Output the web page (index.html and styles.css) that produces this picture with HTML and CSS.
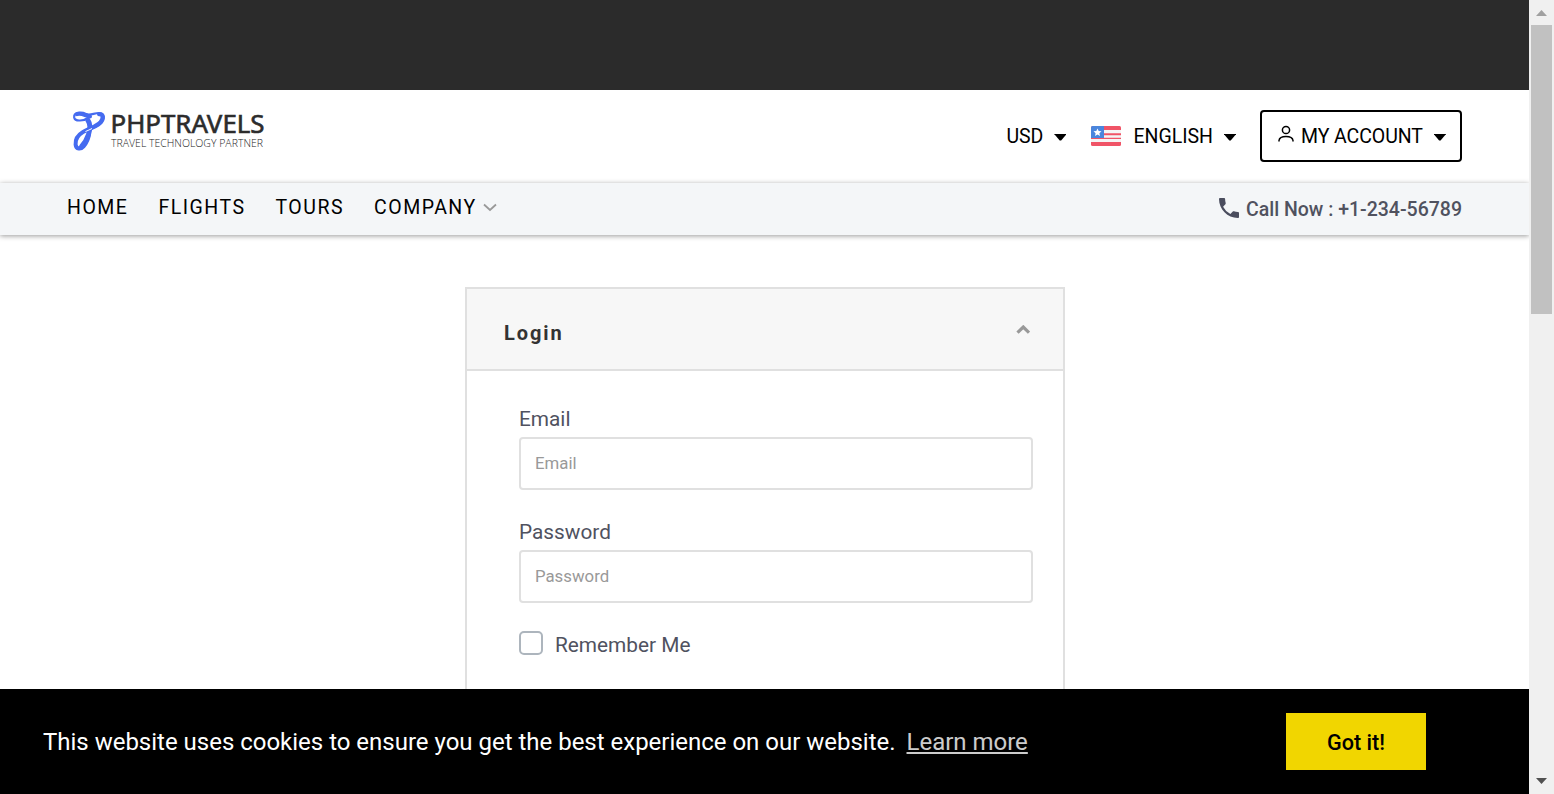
FILE: index.html
```html
<!DOCTYPE html>
<html lang="en">
<head>
<meta charset="utf-8">
<title>Login</title>
<link rel="stylesheet" href="styles.css">
</head>
<body>
<div class="window">
  <div class="page">
    <div class="topbar"></div>
    <header class="header">
      <svg class="logo" width="200" height="46" viewBox="0 0 200 46">
        <g fill="none" stroke="#456bf0" stroke-linecap="round" stroke-linejoin="round">
          <path stroke-width="2.200" d="M19 10.500C14 14 5 15 4.200 10.500C3.500 5.500 11 4.500 16 7C20 9 24 6 29 6C35 6 35 12 31.500 16C28 20 22 22 16 24"/>
          <path stroke-width="4" d="M7 7.200C12 5.500 16 9.500 20 9.500M29 7.200C34 7 33 12 30.500 15C27 19 20 21 13 25C8 28 5.200 33 5.600 37.500C6 42.500 11 42.500 13.500 39.500C16.500 36 18.500 31 19 27"/>
          <path stroke-width="5" d="M18 13.500C20.500 17 20 23 18.500 27.500C17 32 15 36 11.500 39.500"/>
        </g>
        <path fill="none" stroke="#fff" stroke-width="1" d="M15.500 24.500C18 23.500 20 22.500 22 21.500"/>
        <text class="logo-name" x="40.500" y="26" textLength="154" lengthAdjust="spacingAndGlyphs">PHPTRAVELS</text>
        <text class="logo-tag" x="41" y="40.300" textLength="152" lengthAdjust="spacingAndGlyphs">TRAVEL TECHNOLOGY PARTNER</text>
      </svg>
      <div class="tools">
        <div class="pick usd"><span>USD</span><i class="caret"></i></div>
        <div class="pick lang">
          <svg class="flag" width="30" height="20" viewBox="0 0 30 20">
            <rect width="30" height="20" rx="1.500" fill="#f05467"/>
            <path fill="#f5f5f5" d="M13 4h17v3.200H13zM13 9.300h17v2.500H13zM0 13h30v3H0z"/>
            <path fill="#4a86dd" d="M1.500 0H13v12H0V1.500Q0 0 1.500 0z"/>
            <path fill="#fff" d="M6.500 2.500l1.200 2.500 2.800.300-2.100 1.900.600 2.800-2.500-1.400L4 10l.600-2.800-2.100-1.900 2.800-.300z"/>
          </svg>
          <span>ENGLISH</span><i class="caret"></i>
        </div>
        <div class="pick account">
          <svg width="16" height="18" viewBox="0 0 16 18" fill="none" stroke="#000" stroke-width="1.500"><circle cx="8" cy="5" r="3.600"/><path d="M1 16.500V15.500Q1.500 11.500 8 11.500T15 15.500V16.500"/></svg>
          <span>MY ACCOUNT</span><i class="caret"></i>
        </div>
      </div>
    </header>
    <nav class="nav">
      <div class="links">
        <a>HOME</a><a>FLIGHTS</a><a>TOURS</a><a>COMPANY</a>
        <svg width="14" height="9" viewBox="0 0 14 9" fill="none" stroke="#999" stroke-width="1.800"><path d="M1 1.500l6 5.500 6-5.500"/></svg>
      </div>
      <div class="phone">
        <svg width="20" height="20" viewBox="0 0 20 20" fill="#4a4d5e"><path d="M4.100 8.700a16.800 16.800 0 0 0 7.300 7.300l2.400-2.400c.3-.3.800-.4 1.200-.3 1.200.4 2.500.6 3.900.6.600 0 1.100.5 1.100 1.100v3.900c0 .6-.5 1.100-1.100 1.100C8.500 20 0 11.500 0 1.100 0 .5.500 0 1.100 0H5c.6 0 1.100.5 1.100 1.100 0 1.400.2 2.700.6 3.900.1.400 0 .9-.3 1.200z"/></svg>
        <span>Call Now : +1-234-56789</span>
      </div>
    </nav>
    <main class="card">
      <div class="card-head">
        <h1>Login</h1>
        <svg width="14" height="9" viewBox="0 0 14 9" fill="none" stroke="#999" stroke-width="3.200"><path d="M1.500 7.700L7.300 2l5.700 5.700"/></svg>
      </div>
      <form class="card-body">
        <label for="email">Email</label>
        <input class="field" id="email" type="email" placeholder="Email">
        <label for="password">Password</label>
        <input class="field" id="password" type="password" placeholder="Password">
        <div class="remember"><i class="box"></i><span>Remember Me</span></div>
      </form>
    </main>
    <div class="cookies">
      <p>This website uses cookies to ensure you get the best experience on our website. <a>Learn more</a></p>
      <button type="button">Got it!</button>
    </div>
  </div>
  <div class="scrollbar">
    <svg width="11" height="6" viewBox="0 0 11 6" fill="#a0a0a0"><path d="M0 6L5.500 0 11 6z"/></svg>
    <div class="thumb"></div>
    <svg class="down" width="11" height="6" viewBox="0 0 11 6" fill="#505050"><path d="M0 0h11L5.500 6z"/></svg>
  </div>
</div>
</body>
</html>
```
FILE: styles.css
```css
* { box-sizing: border-box; }
body { margin: 0; background: #fff; font-family: Roboto, "Liberation Sans", sans-serif; overflow: hidden; }
.window { display: flex; width: 1554px; height: 794px; }
.page { position: relative; width: 1529px; height: 794px; overflow: hidden; }
.topbar { height: 90px; background: #2b2b2b; }
.header { height: 93px; display: flex; justify-content: space-between; padding: 17px 67px 0 70px; }
.logo-name { font: 400 24.500px "Noto Sans", sans-serif; fill: #2c2c2c; stroke: #2c2c2c; stroke-width: .6px; }
.logo-tag { font: 300 11.500px "Open Sans", sans-serif; fill: #222; }
.tools { display: flex; align-items: center; height: 52px; margin-top: 3px; }
.pick { display: flex; align-items: center; font-size: 19.500px; line-height: 24px; color: #000; white-space: nowrap; }
.pick span { padding-top: 2px; }
.caret { width: 12px; height: 7px; background: #000; clip-path: polygon(0 0, 100% 0, 100% 12%, 56% 100%, 44% 100%, 0 12%); margin: 2px 0 0 11px; }
.lang { margin-left: 25px; }
.flag { margin-right: 12px; }
.account { height: 52px; width: 202px; margin-left: 24px; padding-left: 16px; border: 2px solid #000; border-radius: 4px; }
.account svg { margin: -4px 7px 0 0; }
.account span { letter-spacing: -.08px; }
.nav { position: relative; height: 52px; display: flex; justify-content: space-between; padding: 0 67px; background: #f4f6f8; box-shadow: 0 1px 5px rgba(0, 0, 0, .4); }
.links { display: flex; align-items: center; height: 48px; font-size: 19.500px; letter-spacing: 1.500px; color: #000; }
.links a { margin-right: 30px; }
.links a:nth-of-type(4) { margin-right: 6px; }
.phone { display: flex; align-items: center; gap: 7px; font-size: 19.500px; font-weight: 500; color: #50525f; }
.phone svg { margin-top: -3px; }
.phone span { padding-top: 1px; }
.card { width: 600px; height: 520px; margin: 52px 0 0 465px; border: 2px solid #e0e0e0; }
.card-head { height: 82px; display: flex; align-items: center; justify-content: space-between; padding: 8px 33px 0 37px; background: #f7f7f7; border-bottom: 2px solid #e0e0e0; }
.card-head h1 { margin: 0; font-size: 20px; font-weight: 700; letter-spacing: 1.900px; color: #333; }
.card-head svg { margin-top: -7px; }
.card-body { display: flex; flex-direction: column; padding: 36px 30px 0 52px; }
.card-body label, .remember { font-size: 20.800px; line-height: 24px; color: #50525f; }
.field { height: 53px; margin: 6px 0 30px; padding: 0 14px 2px; border: 2px solid #e0e0e0; border-radius: 4px; background: #fff; font: 16.800px Roboto, sans-serif; }
.field::placeholder { color: #999; }
.remember { display: flex; align-items: center; gap: 12px; }
.box { width: 24px; height: 24px; margin-top: -4px; border: 2px solid #adb5bd; border-radius: 5px; }
.cookies { position: absolute; left: 0; right: 0; bottom: 0; height: 105px; display: flex; align-items: center; justify-content: space-between; padding: 0 103px 0 43px; background: #000; color: #fff; }
.cookies p { margin: 0; font-size: 24px; line-height: 36px; letter-spacing: -.01px; white-space: nowrap; }
.cookies a { margin-left: 5px; opacity: .8; text-decoration: underline; }
.cookies button { width: 140px; height: 57px; padding: 2px 0 0; border: 0; background: #f1d600; font: 500 21.600px Roboto, sans-serif; color: #000; }
.scrollbar { width: 25px; height: 794px; padding: 10px 2px 10px; display: flex; flex-direction: column; align-items: center; background: #f0f0f0; }
.thumb { width: 21px; height: 289px; margin-top: 9px; background: #c1c1c1; }
.down { margin-top: auto; }
```
